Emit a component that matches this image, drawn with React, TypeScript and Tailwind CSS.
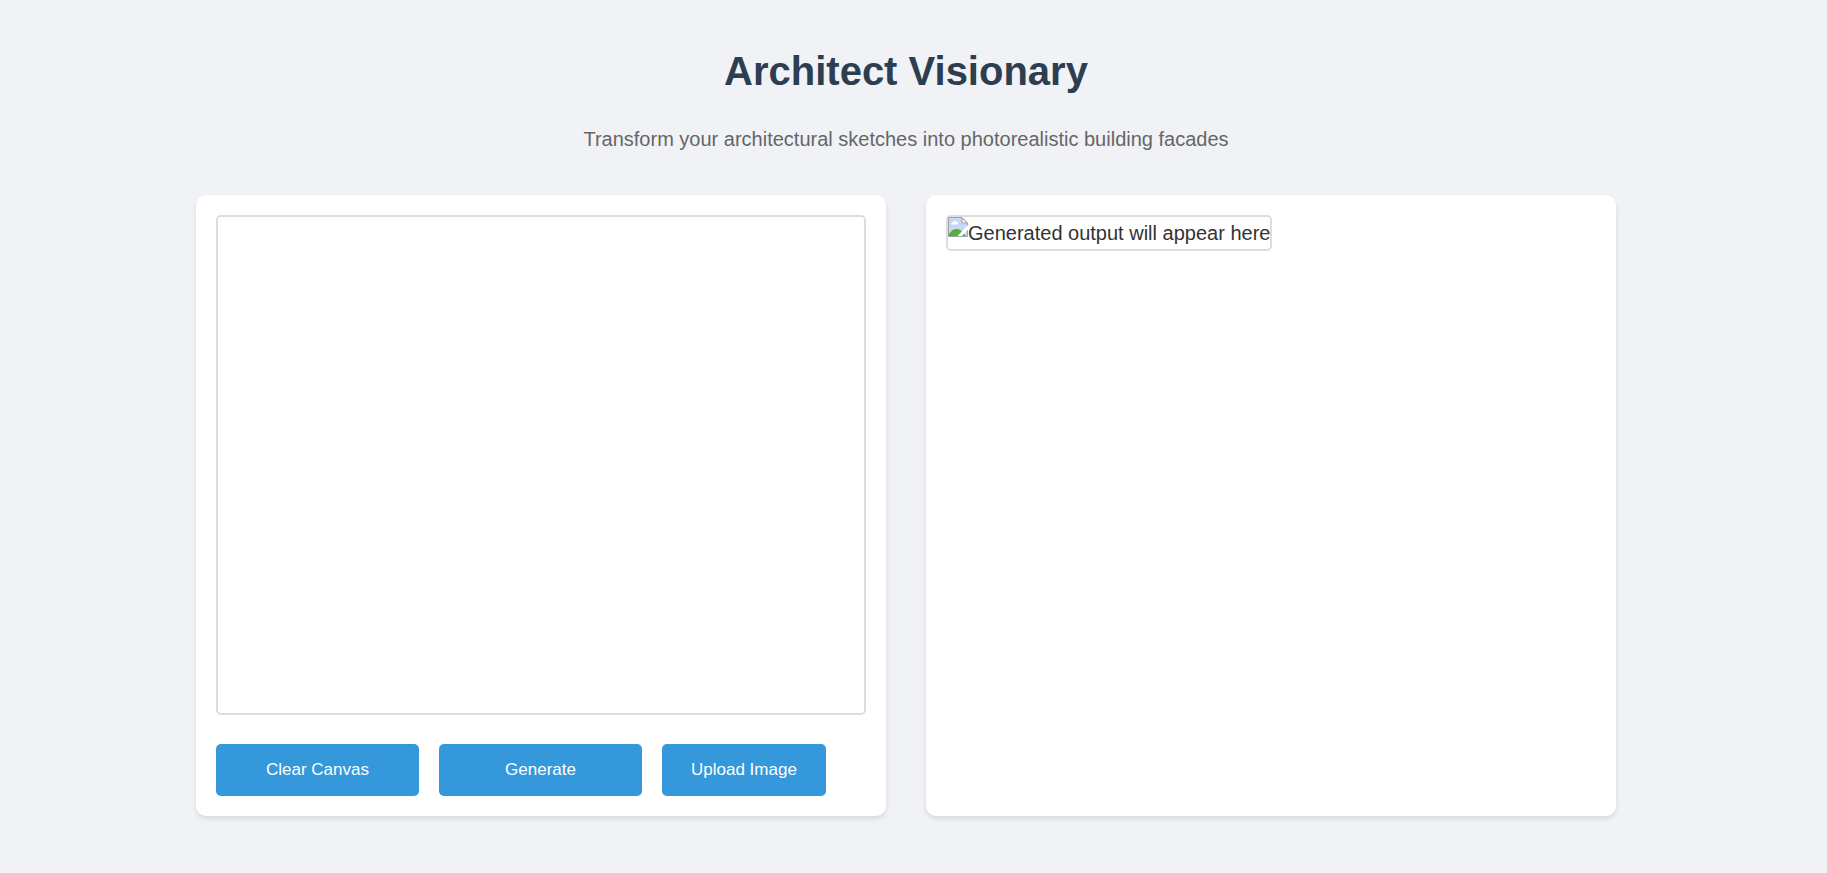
import { useRef, useState } from "react";

const buttonClass =
  "h-[52px] cursor-pointer rounded-[5px] bg-[#3498db] text-[17px] leading-[26px] text-white hover:bg-[#2980b9]";

function MissingImageIcon() {
  return (
    <svg width="20" height="20" viewBox="0 0 20 20" aria-hidden="true" className="shrink-0">
      <path d="M1 1H14L19 6V19H1Z" fill="#c6d7f8" />
      <path d="M3.5 7.5C2.8 5.8 4.4 5 5.3 5.3C5.8 3.4 8.4 3.6 8.8 5.3C10.4 5.2 10.7 7.5 9.5 7.5Z" fill="#fff" />
      <path d="M1 19V17C4 12 9 10.5 13 13.5L18 19Z" fill="#5aac37" />
      <path d="M0.5 19.5V0.5H14L19.5 6V19.5Z" fill="none" stroke="#a3a3a3" />
      <path d="M14 1V6H19Z" fill="#fff" stroke="#a3a3a3" />
      <path d="M20 8V12.5L14 19H9.5Z" fill="#fff" />
    </svg>
  );
}

export default function App() {
  const canvasRef = useRef<HTMLCanvasElement>(null);
  const fileRef = useRef<HTMLInputElement>(null);
  const [drawing, setDrawing] = useState(false);

  const clearCanvas = () => {
    const canvas = canvasRef.current;
    canvas?.getContext("2d")?.clearRect(0, 0, canvas.width, canvas.height);
  };

  const draw = (event: React.PointerEvent<HTMLCanvasElement>) => {
    if (!drawing) return;
    const context = event.currentTarget.getContext("2d");
    context?.fillRect(event.nativeEvent.offsetX, event.nativeEvent.offsetY, 2, 2);
  };

  return (
    <div className="min-h-screen bg-[#f0f2f6] pt-[39px] pr-[55px] pb-10 pl-10 font-['Liberation_Sans',Arial,sans-serif] text-xl leading-8 text-[#333]">
      <div className="mx-auto max-w-[1420px]">
        <header className="mb-10 text-center">
          <h1 className="mb-5 text-[40px] leading-[64px] font-bold text-[#2c3e50]">Architect Visionary</h1>
          <p className="text-[#666]">Transform your architectural sketches into photorealistic building facades</p>
        </header>
        <main className="grid grid-cols-1 gap-10 lg:grid-cols-2">
          <section className="rounded-[10px] bg-white p-5 shadow-[0_3px_5px_rgba(0,0,0,0.1)]">
            <canvas
              ref={canvasRef}
              width={646}
              height={496}
              aria-label="Sketch canvas"
              onPointerDown={() => setDrawing(true)}
              onPointerUp={() => setDrawing(false)}
              onPointerMove={draw}
              className="h-[500px] w-full cursor-crosshair rounded-[5px] border-2 border-[#ddd]"
            />
            <div className="mt-[29px] flex flex-wrap gap-5">
              <button type="button" onClick={clearCanvas} className={`${buttonClass} w-[203px]`}>
                Clear Canvas
              </button>
              <button type="button" className={`${buttonClass} w-[203px]`}>
                Generate
              </button>
              <button type="button" onClick={() => fileRef.current?.click()} className={`${buttonClass} px-[29px]`}>
                Upload Image
              </button>
              <input ref={fileRef} type="file" accept="image/*" aria-label="Upload image file" className="hidden" />
            </div>
          </section>
          <section className="flex items-start rounded-[10px] bg-white p-5 shadow-[0_3px_5px_rgba(0,0,0,0.1)]">
            <div className="flex items-start rounded-[5px] border-2 border-[#ddd]">
              <MissingImageIcon />
              <span>Generated output will appear here</span>
            </div>
          </section>
        </main>
      </div>
    </div>
  );
}
